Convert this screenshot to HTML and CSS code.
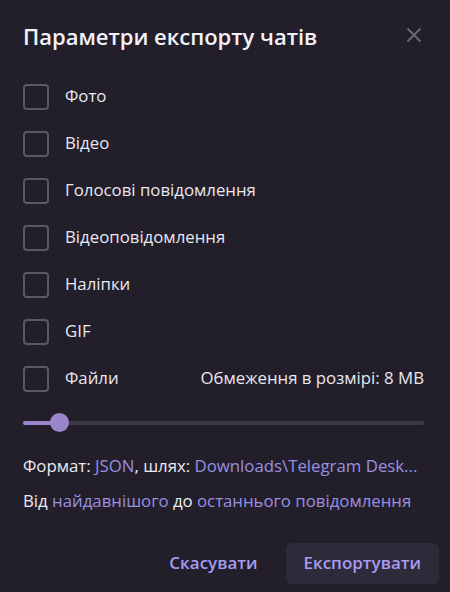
FILE: index.html
```html
<!DOCTYPE html>
<html lang="uk">
<head>
<meta charset="utf-8">
<link rel="stylesheet" href="styles.css">
</head>
<body>
<div class="dialog">
  <div class="header">
    <div class="title">Параметри експорту чатів</div>
    <svg class="close" width="16" height="16" viewBox="0 0 16 16"><path d="M1.5 1.5L14.5 14.5M14.5 1.5L1.5 14.5" stroke="#6e6b78" stroke-width="1.8" fill="none"/></svg>
  </div>
  <div class="options">
    <div class="row"><span class="box"></span><span class="label">Фото</span></div>
    <div class="row"><span class="box"></span><span class="label">Відео</span></div>
    <div class="row"><span class="box"></span><span class="label">Голосові повідомлення</span></div>
    <div class="row"><span class="box"></span><span class="label">Відеоповідомлення</span></div>
    <div class="row"><span class="box"></span><span class="label">Наліпки</span></div>
    <div class="row"><span class="box"></span><span class="label">GIF</span></div>
    <div class="row"><span class="box"></span><span class="label">Файли</span><span class="limit">Обмеження в розмірі: 8 MB</span></div>
  </div>
  <div class="slider">
    <div class="fill" style="width:36px"></div>
    <div class="thumb"></div>
  </div>
  <div class="info">Формат: <span class="link">JSON</span>, шлях: <span class="link">Downloads\Telegram Desk...</span></div>
  <div class="info second">Від <span class="link">найдавнішого</span> до <span class="link">останнього повідомлення</span></div>
  <div class="buttons">
    <div class="btn">Скасувати</div>
    <div class="btn primary">Експортувати</div>
  </div>
</div>
</body>
</html>
```
FILE: styles.css
```css
html, body {
  margin: 0;
  padding: 0;
  background: #221f2b;
}
body {
  width: 450px;
  height: 592px;
  overflow: hidden;
  font-family: "Open Sans", "Noto Sans", sans-serif;
  color: #e9e7ef;
}
.dialog {
  display: flex;
  flex-direction: column;
  padding: 0 11px 0 23px;
}
.header {
  display: flex;
  justify-content: space-between;
  align-items: center;
  height: 36px;
  margin-top: 18px;
}
.title {
  font-size: 22px;
  font-weight: 600;
  color: #f2f1f6;
}
.close {
  margin-right: 17px;
  margin-top: -2px;
}
.options {
  display: flex;
  flex-direction: column;
  gap: 21px;
  margin-top: 30px;
}
.row {
  display: flex;
  align-items: center;
  height: 26px;
}
.box {
  width: 22px;
  height: 22px;
  border: 2px solid #5b5866;
  border-radius: 4px;
  flex: none;
}
.label {
  font-size: 16.8px;
  margin-left: 16px;
  margin-top: -4px;
}
.limit {
  margin-left: auto;
  margin-right: 15px;
  font-size: 16.8px;
  margin-top: -4px;
}
.slider {
  position: relative;
  height: 4px;
  margin: 29px 15px 0 0;
  background: #3d3a47;
  border-radius: 2px;
}
.fill {
  height: 4px;
  background: #9b86cc;
  border-radius: 2px;
}
.thumb {
  position: absolute;
  left: 27px;
  top: -8px;
  width: 19px;
  height: 19px;
  border-radius: 50%;
  background: #9b86cc;
}
.info {
  font-size: 16.8px;
  margin-top: 29px;
  color: #ecebf1;
}
.info.second {
  margin-top: 12px;
}
.link {
  color: #9a8fe0;
}
.buttons {
  display: flex;
  justify-content: flex-end;
  gap: 10px;
  margin-top: 31px;
}
.btn {
  font-size: 17px;
  font-weight: 600;
  color: #a79cf2;
  height: 41px;
  line-height: 40px;
  padding: 0 18px;
  border-radius: 6px;
}
.btn.primary {
  background: #2e2a39;
}
```
